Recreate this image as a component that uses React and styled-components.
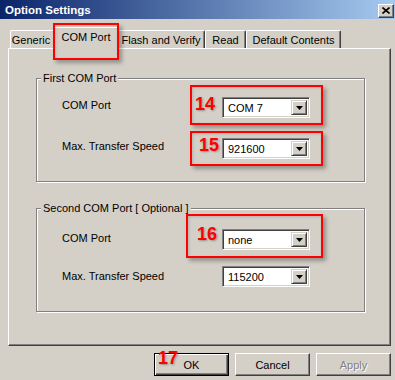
import React from 'react';
import styled, { createGlobalStyle, css } from 'styled-components';

const GlobalStyle = createGlobalStyle`
  html, body {
    margin: 0;
    padding: 0;
    background: #d4d0c8;
  }
  body {
    font-family: "Liberation Sans", Arial, sans-serif;
    font-size: 11px;
    color: #000;
  }
`;

const Window = styled.div`
  width: 395px;
  height: 380px;
  overflow: hidden;
  background: #d4d0c8;
  display: flex;
  flex-direction: column;
`;

const TitleBar = styled.div`
  flex: none;
  height: 19px;
  display: flex;
  align-items: center;
  justify-content: space-between;
  padding: 0 1px 0 5px;
  background: linear-gradient(to right, #0a246a, #a6caf0);
`;

const Title = styled.span`
  color: #fff;
  font-weight: bold;
  font-size: 11.5px;
`;

const CloseButton = styled.div`
  box-sizing: border-box;
  width: 16px;
  height: 14px;
  margin-top: 2px;
  display: flex;
  align-items: center;
  justify-content: center;
  background: #d4d0c8;
  border: 1px solid;
  border-color: #fff #404040 #404040 #fff;
  box-shadow: inset -1px -1px 0 #808080;
`;

const TabRow = styled.div`
  flex: none;
  height: 21px;
  margin-top: 8px;
  padding-left: 10px;
  display: flex;
  align-items: flex-end;
`;

const Tab = styled.div`
  box-sizing: border-box;
  width: ${(p) => p.$w}px;
  height: 18px;
  display: flex;
  align-items: center;
  justify-content: center;
  padding-right: ${(p) => p.$pr || 0}px;
  border-top: 1px solid #fff;
  border-left: 1px solid #fff;
  border-right: 1px solid #404040;
  border-radius: 2px 2px 0 0;
  box-shadow: inset -1px 0 0 #808080;
  background: #d4d0c8;
  white-space: nowrap;
  ${(p) =>
    p.$active &&
    css`
      height: 22px;
      padding-bottom: 3px;
    `}
`;

const Callout = styled.div`
  position: relative;
  display: flex;
`;

const TabCallout = styled(Callout)`
  margin: 0 -2px -1px;
  z-index: 1;
`;

const RedFrame = styled.div`
  position: absolute;
  top: ${(p) => p.$t}px;
  right: ${(p) => p.$r}px;
  bottom: ${(p) => p.$b}px;
  left: ${(p) => p.$l}px;
  border: 2px solid #ff0000;
  box-shadow: 3px 3px 4px rgba(0, 0, 0, 0.3), inset 1px 1px 3px rgba(0, 0, 0, 0.15);
  pointer-events: none;
`;

const Marker = styled.span`
  position: absolute;
  left: ${(p) => p.$x}px;
  top: ${(p) => p.$y}px;
  font-family: "Liberation Sans", Arial, sans-serif;
  font-weight: bold;
  font-size: 18px;
  line-height: 18px;
  color: #ff0000;
  text-shadow: 1px 1px 2px rgba(0, 0, 0, 0.3);
`;

const Panel = styled.div`
  flex: none;
  box-sizing: border-box;
  width: 383px;
  height: 298px;
  margin-left: 8px;
  border-top: 1px solid #fff;
  border-left: 1px solid #fff;
  border-right: 1px solid #404040;
  border-bottom: 1px solid #404040;
  box-shadow: inset -1px -1px 0 #808080;
  padding: 29px 0 0 27px;
  display: flex;
  flex-direction: column;
  gap: 26px;
`;

const GroupBox = styled.div`
  position: relative;
  box-sizing: border-box;
  width: 329px;
  height: 104px;
  border: 1px solid #808080;
  box-shadow: inset 1px 1px 0 #fff, 1px 1px 0 #fff;
  padding: ${(p) => p.$pt}px 0 0 25px;
  display: grid;
  grid-template-columns: 160px 88px;
  row-gap: ${(p) => p.$gap}px;
  align-content: start;
  align-items: center;
`;

const Legend = styled.span`
  position: absolute;
  top: -7px;
  left: 4px;
  padding: 0 2px;
  line-height: 13px;
  background: #d4d0c8;
  white-space: nowrap;
`;

const Label = styled.span`
  padding-bottom: ${(p) => p.$lift || 0}px;
  white-space: nowrap;
`;

const ComboBox = styled.div`
  box-sizing: border-box;
  width: 88px;
  height: 21px;
  display: flex;
  align-items: stretch;
  background: #fff;
  border: 1px solid;
  border-color: #808080 #fff #fff #808080;
  box-shadow: inset 1px 1px 0 #404040, inset -1px -1px 0 #d4d0c8;
  padding: 2px 2px 2px 5px;
`;

const ComboText = styled.span`
  flex: 1;
  display: flex;
  align-items: center;
`;

const DropButton = styled.span`
  box-sizing: border-box;
  width: 16px;
  display: flex;
  align-items: center;
  justify-content: center;
  background: #d4d0c8;
  border: 1px solid;
  border-color: #d4d0c8 #404040 #404040 #d4d0c8;
  box-shadow: inset 1px 1px 0 #fff, inset -1px -1px 0 #808080;
`;

const ButtonRow = styled.div`
  flex: none;
  margin-top: 7px;
  padding-right: 4px;
  display: flex;
  justify-content: flex-end;
  gap: 6px;
`;

const Button = styled.div`
  box-sizing: border-box;
  width: 75px;
  height: 23px;
  display: flex;
  align-items: center;
  justify-content: center;
  background: #d4d0c8;
  border: 1px solid;
  border-color: #fff #404040 #404040 #fff;
  box-shadow: inset -1px -1px 0 #808080;
  ${(p) =>
    p.$default &&
    css`
      border: 1px solid #000;
      box-shadow: inset 1px 1px 0 #fff, inset -1px -1px 0 #404040, inset -2px -2px 0 #808080;
    `}
  ${(p) =>
    p.$disabled &&
    css`
      color: #808080;
      text-shadow: 1px 1px 0 #fff;
    `}
`;

function Combo({ value }) {
  return (
    <ComboBox>
      <ComboText>{value}</ComboText>
      <DropButton>
        <svg width="7" height="4" viewBox="0 0 7 4">
          <polygon points="0,0 7,0 3.5,4" fill="#000" />
        </svg>
      </DropButton>
    </ComboBox>
  );
}

export default function App() {
  return (
    <>
      <GlobalStyle />
      <Window>
        <TitleBar>
          <Title>Option Settings</Title>
          <CloseButton>
            <svg width="8" height="7" viewBox="0 0 8 7">
              <path d="M0.5 0.5 L7.5 6.5 M7.5 0.5 L0.5 6.5" stroke="#000" strokeWidth="1.6" />
            </svg>
          </CloseButton>
        </TitleBar>

        <TabRow>
          <Tab $w={45} $pr={3}>Generic</Tab>
          <TabCallout>
            <Tab $w={66} $active>COM Port</Tab>
            <RedFrame $t={-4} $r={0} $b={-11} $l={0} />
          </TabCallout>
          <Tab $w={88}>Flash and Verify</Tab>
          <Tab $w={41}>Read</Tab>
          <Tab $w={95}>Default Contents</Tab>
        </TabRow>

        <Panel>
          <GroupBox $pt={18} $gap={20}>
            <Legend>First COM Port</Legend>
            <Label $lift={6}>COM Port</Label>
            <Callout>
              <Combo value="COM 7" />
              <RedFrame $t={-12} $r={-13} $b={-7} $l={-32} />
              <Marker $x={-27} $y={-2}>14</Marker>
            </Callout>
            <Label $lift={6}>Max. Transfer Speed</Label>
            <Callout>
              <Combo value="921600" />
              <RedFrame $t={-7} $r={-13} $b={-7} $l={-32} />
              <Marker $x={-23} $y={-2}>15</Marker>
            </Callout>
          </GroupBox>

          <GroupBox $pt={20} $gap={16}>
            <Legend>Second COM Port [ Optional ]</Legend>
            <Label $lift={4}>COM Port</Label>
            <Callout>
              <Combo value="none" />
              <RedFrame $t={-15} $r={-13} $b={-8} $l={-36} />
              <Marker $x={-25} $y={-4}>16</Marker>
            </Callout>
            <Label $lift={2}>Max. Transfer Speed</Label>
            <Combo value="115200" />
          </GroupBox>
        </Panel>

        <ButtonRow>
          <Callout>
            <Button $default>OK</Button>
            <Marker $x={4} $y={-4}>17</Marker>
          </Callout>
          <Button>Cancel</Button>
          <Button $disabled>Apply</Button>
        </ButtonRow>
      </Window>
    </>
  );
}
